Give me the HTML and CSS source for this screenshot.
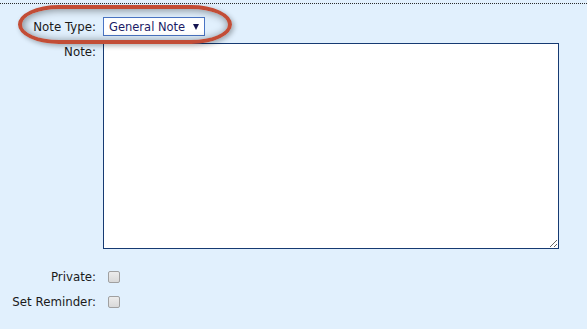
FILE: index.html
```html
<!DOCTYPE html>
<html lang="en">
<head>
    <meta charset="UTF-8">
    <title>Add Note</title>
    <link rel="stylesheet" href="styles.css">
</head>
<body>

<div class="rule"></div>

<form class="note-form">
    <div class="row type-row">
        <label for="note-type">Note Type:</label>
        <span class="select-wrap">
            <select id="note-type">
                <option>General Note</option>
            </select>
        </span>
        <span class="highlight"></span>
    </div>
    <div class="row note-row">
        <label for="note">Note:</label>
        <textarea id="note"></textarea>
    </div>
    <div class="row check-row private-row">
        <label for="private">Private:</label>
        <input type="checkbox" id="private">
    </div>
    <div class="row check-row">
        <label for="reminder">Set Reminder:</label>
        <input type="checkbox" id="reminder">
    </div>
</form>

</body>
</html>
```

FILE: styles.css
```css
body {
    margin: 0;
    background: #e1f0fd;
    font-family: "DejaVu Sans", Verdana, sans-serif;
    font-size: 11.8px;
    color: #1a1a1a;
}
.rule {
    margin-top: 3px;
    border-top: 1px dotted #2a2a2a;
}
.note-form {
    padding-top: 13px;
}
.row {
    display: flex;
    align-items: center;
    gap: 7px;
}
.row label {
    width: 96px;
    flex: none;
    text-align: right;
}
.type-row {
    position: relative;
}
.select-wrap {
    position: relative;
    display: inline-block;
}
.select-wrap::after {
    content: "";
    position: absolute;
    right: 6px;
    top: 7px;
    border-left: 3.5px solid transparent;
    border-right: 3.5px solid transparent;
    border-top: 6px solid #141450;
}
.select-wrap select {
    appearance: none;
    -webkit-appearance: none;
    display: block;
    width: 102px;
    height: 19px;
    margin: 0;
    padding: 0 0 0 5px;
    border: 1px solid #4a74c4;
    border-radius: 0;
    background: white;
    font-family: inherit;
    font-size: 11.5px;
    color: #1b1b66;
}
.highlight {
    position: absolute;
    left: 18px;
    top: -12px;
    width: 206px;
    height: 31px;
    border: 4px solid #c24d36;
    border-radius: 42px / 20px;
    box-shadow: inset 1px 1px 8px rgba(0, 0, 0, 0.45), 2px 2px 5px rgba(0, 0, 0, 0.3);
    pointer-events: none;
}
.note-row {
    align-items: flex-start;
    margin-top: 7px;
}
.note-row label {
    padding-top: 2px;
}
.note-row textarea {
    box-sizing: border-box;
    width: 456px;
    height: 206px;
    margin: 0;
    border: 1px solid #163a72;
    background: white;
}
.check-row {
    height: 25px;
}
.private-row {
    margin-top: 15px;
}
.check-row input {
    appearance: none;
    -webkit-appearance: none;
    width: 12px;
    height: 12px;
    margin: 0 0 0 5px;
    border: 1px solid #a0a0a0;
    border-radius: 2px;
    background: linear-gradient(#ececec, #d9d9d9);
}
```
